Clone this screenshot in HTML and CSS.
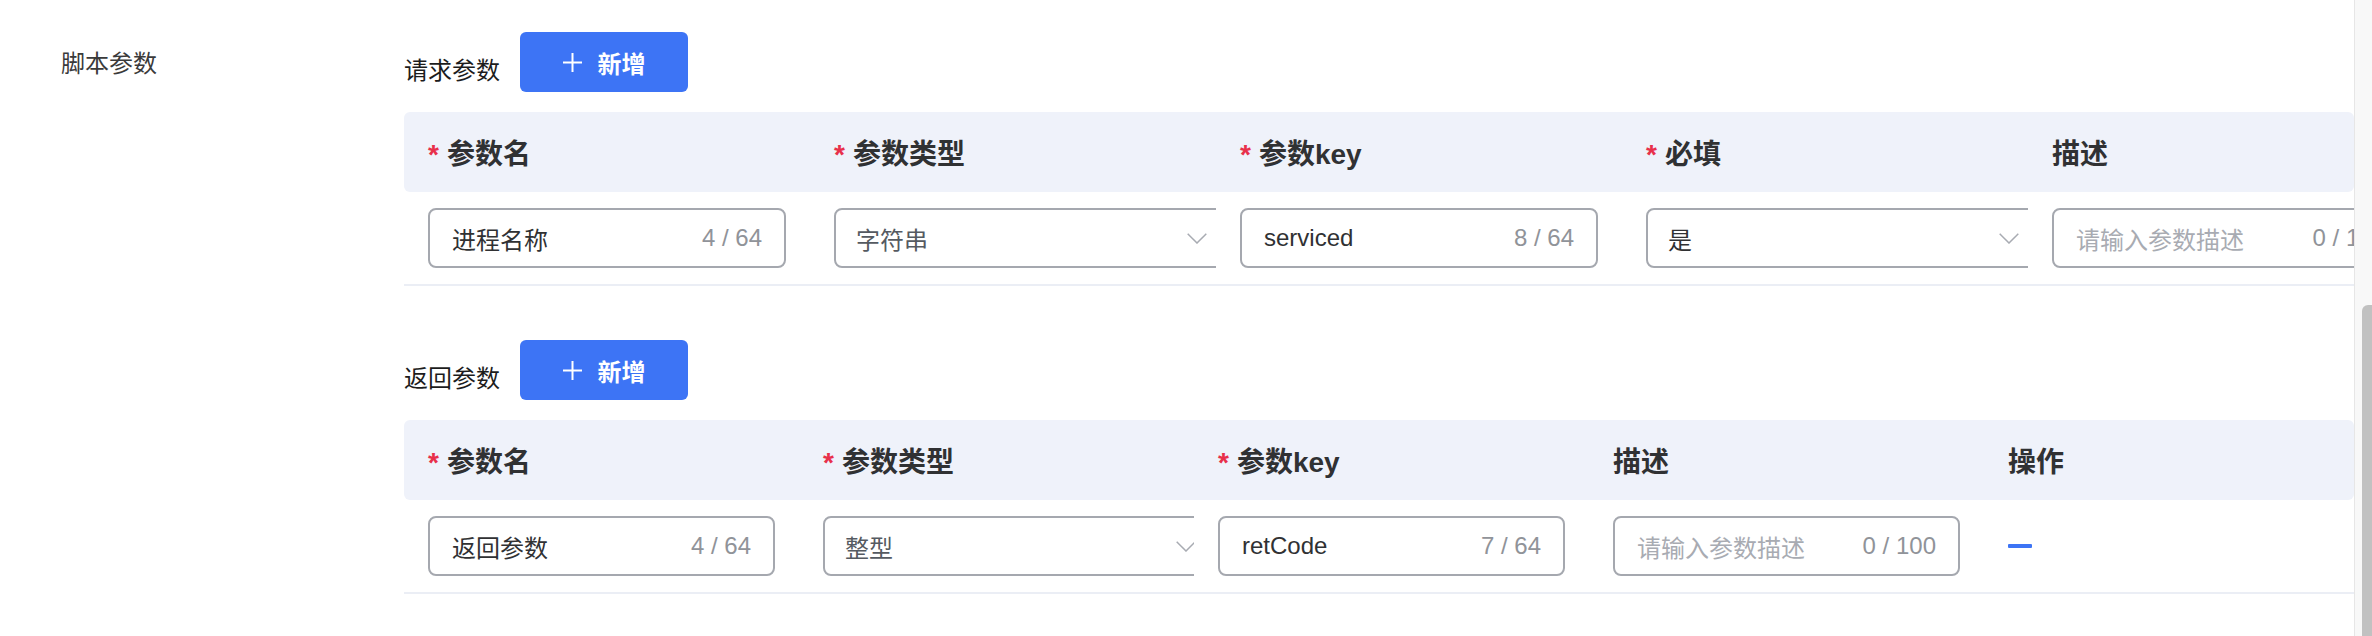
FILE: index.html
```html
<!DOCTYPE html>
<html lang="zh-CN">
<head>
<meta charset="utf-8">
<title>脚本参数</title>
<link rel="stylesheet" href="styles.css">
</head>
<body>
<div class="page">
  <div class="content">
    <div class="form-item">
      <div class="form-label">脚本参数</div>
      <div class="form-body">

        <div class="section">
          <div class="section-head">
            <span class="section-title">请求参数</span>
            <button class="btn-add" type="button">
              <svg class="plus" width="19" height="19" viewBox="0 0 19 19"><path d="M9.5 0V19M0 9.5H19" stroke="#fff" stroke-width="2" fill="none"/></svg>
              <span>新增</span>
            </button>
          </div>
          <div class="ptable req-table">
            <div class="prow phead">
              <div class="pcell"><span class="req">*</span>参数名</div>
              <div class="pcell"><span class="req">*</span>参数类型</div>
              <div class="pcell"><span class="req">*</span>参数key</div>
              <div class="pcell"><span class="req">*</span>必填</div>
              <div class="pcell">描述</div>
            </div>
            <div class="prow pbody">
              <div class="pcell"><div class="input"><span class="val">进程名称</span><span class="count">4 / 64</span></div></div>
              <div class="pcell"><div class="select"><span class="val sel">字符串</span><svg class="arrow" width="20" height="11" viewBox="0 0 20 11"><path d="M0.7 0.7L10 10L19.3 0.7" stroke="#a8abb2" stroke-width="1.5" fill="none"/></svg></div></div>
              <div class="pcell"><div class="input"><span class="val">serviced</span><span class="count">8 / 64</span></div></div>
              <div class="pcell"><div class="select"><span class="val">是</span><svg class="arrow" width="20" height="11" viewBox="0 0 20 11"><path d="M0.7 0.7L10 10L19.3 0.7" stroke="#a8abb2" stroke-width="1.5" fill="none"/></svg></div></div>
              <div class="pcell"><div class="input"><span class="val ph">请输入参数描述</span><span class="count">0 / 100</span></div></div>
            </div>
          </div>
        </div>

        <div class="section">
          <div class="section-head">
            <span class="section-title">返回参数</span>
            <button class="btn-add" type="button">
              <svg class="plus" width="19" height="19" viewBox="0 0 19 19"><path d="M9.5 0V19M0 9.5H19" stroke="#fff" stroke-width="2" fill="none"/></svg>
              <span>新增</span>
            </button>
          </div>
          <div class="ptable resp-table">
            <div class="prow phead">
              <div class="pcell"><span class="req">*</span>参数名</div>
              <div class="pcell"><span class="req">*</span>参数类型</div>
              <div class="pcell"><span class="req">*</span>参数key</div>
              <div class="pcell">描述</div>
              <div class="pcell">操作</div>
            </div>
            <div class="prow pbody">
              <div class="pcell"><div class="input"><span class="val">返回参数</span><span class="count">4 / 64</span></div></div>
              <div class="pcell"><div class="select"><span class="val sel">整型</span><svg class="arrow" width="20" height="11" viewBox="0 0 20 11"><path d="M0.7 0.7L10 10L19.3 0.7" stroke="#a8abb2" stroke-width="1.5" fill="none"/></svg></div></div>
              <div class="pcell"><div class="input"><span class="val">retCode</span><span class="count">7 / 64</span></div></div>
              <div class="pcell"><div class="input"><span class="val ph">请输入参数描述</span><span class="count">0 / 100</span></div></div>
              <div class="pcell"><span class="minus"></span></div>
            </div>
          </div>
        </div>

      </div>
    </div>
  </div>
  <div class="scrollbar"><div class="thumb"></div></div>
</div>
</body>
</html>
```
FILE: styles.css
```css
html, body {
  margin: 0;
  padding: 0;
  background: #fff;
}
body {
  font-family: "Liberation Sans", "Noto Sans CJK SC", sans-serif;
  font-size: 24px;
  color: #303133;
}
.page {
  display: flex;
  height: 636px;
  overflow: hidden;
}
.content {
  flex: 1;
  min-width: 0;
  overflow: hidden;
}
.form-item {
  display: flex;
}
.form-label {
  flex-shrink: 0;
  width: 343px;
  padding-left: 61px;
  padding-top: 46px;
  line-height: 36px;
  color: #3a3a3a;
}
.form-body {
  flex: 1;
  min-width: 0;
  overflow: hidden;
  padding-top: 32px;
}
.section + .section {
  margin-top: 54px;
}
.section-head {
  display: flex;
  align-items: flex-start;
}
.section-title {
  width: 116px;
  line-height: 36px;
  margin-top: 21px;
  color: #1c1c1c;
}
.btn-add {
  width: 168px;
  height: 60px;
  border: none;
  border-radius: 6px;
  background: #3d74f5;
  color: #fff;
  font-family: inherit;
  font-size: 24px;
  font-weight: 700;
  display: flex;
  align-items: center;
  justify-content: center;
  gap: 16px;
  padding: 0;
}
.ptable {
  margin-top: 20px;
}
.prow {
  display: grid;
  align-items: center;
}
.req-table .prow {
  grid-template-columns: repeat(5, 406px);
}
.resp-table .prow {
  grid-template-columns: repeat(5, 395px);
}
.phead {
  height: 80px;
  background: #eff2fa;
  border-radius: 6px;
  font-size: 28px;
  font-weight: 700;
  color: #303133;
}
.pbody {
  padding: 16px 0;
  border-bottom: 2px solid #ebeef5;
}
.pcell {
  padding: 0 24px;
  overflow: hidden;
  white-space: nowrap;
}
.req {
  color: #e8304a;
  margin-right: 8px;
}
.input,
.select {
  box-sizing: border-box;
  height: 60px;
  border: 2px solid #a5a8af;
  border-radius: 8px;
  display: flex;
  align-items: center;
  background: #fff;
}
.input {
  width: 100%;
  padding: 0 22px;
}
.select {
  width: 396px;
  padding: 0 21px 0 20px;
}
.val {
  flex: 1;
  color: #303133;
}
.val.sel {
  color: #555a61;
}
.val.ph {
  color: #a8abb2;
}
.count {
  color: #909399;
}
.arrow {
  flex-shrink: 0;
}
.minus {
  display: block;
  width: 24px;
  height: 4px;
  border-radius: 1px;
  background: #3d74f5;
}
.scrollbar {
  flex-shrink: 0;
  box-sizing: border-box;
  width: 18px;
  height: 636px;
  background: #f8f8f8;
  border-left: 1px solid #e6e6e6;
  padding-top: 305px;
}
.thumb {
  margin-left: 7px;
  height: 340px;
  background: #c1c1c1;
  border-top-left-radius: 6px;
}
```
